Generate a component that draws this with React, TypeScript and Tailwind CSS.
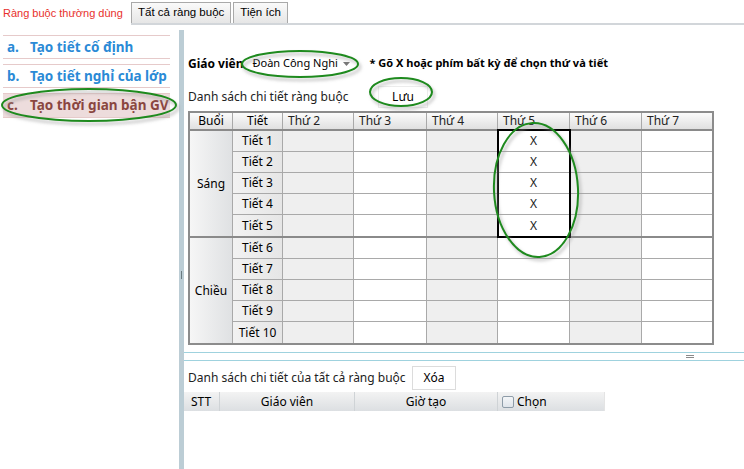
import React from "react";

const days = ["Thứ 2", "Thứ 3", "Thứ 4", "Thứ 5", "Thứ 6", "Thứ 7"];

function DayCells({ row, last }: { row: number; last: boolean }) {
  return (
    <>
      {days.map((d, i) => {
        const gray = i % 2 === 0;
        const x = i === 3 && row <= 5;
        return (
          <div
            key={d}
            className={`${gray ? "bg-[#efefef]" : "bg-white"} ${i < 5 ? "border-r border-r-[#a9a9a9]" : ""} ${
              last ? "" : "border-b border-b-[#a9a9a9]"
            } flex items-center justify-center text-[12px] text-[#222]`}
          >
            {x ? "X" : ""}
          </div>
        );
      })}
    </>
  );
}

function Ellipse({ cx, cy, rx, ry, rot = 0 }: { cx: number; cy: number; rx: number; ry: number; rot?: number }) {
  return (
    <g transform={`rotate(${rot} ${cx} ${cy})`}>
      <ellipse cx={cx + 2} cy={cy + 3} rx={rx} ry={ry} fill="none" stroke="#9a9a9a" strokeOpacity="0.45" strokeWidth="3" filter="url(#blur)" />
      <ellipse cx={cx} cy={cy} rx={rx} ry={ry} fill="none" stroke="#1e8a1e" strokeWidth="2" />
    </g>
  );
}

export default function App() {
  const grid = "grid grid-cols-[43px_50px_71px_73px_71px_72px_72px_70px]";
  const rowsSang = [1, 2, 3, 4, 5];
  const rowsChieu = [6, 7, 8, 9, 10];
  return (
    <div className="w-[744px] h-[469px] relative overflow-hidden bg-white text-black font-['Noto_Sans',sans-serif]">
      {/* top tabs */}
      <div className="flex h-[25px]">
        <div className="w-[131px] pl-[3px] pt-[6px] text-[11px] text-[#e8302c] leading-[15px] whitespace-nowrap font-['Liberation_Sans',sans-serif]">Ràng buộc thường dùng</div>
        <div className="flex-1 flex items-end border-b-2 border-[#d2d6da] font-['Liberation_Sans',sans-serif]">
          <div className="h-[21px] px-[6px] border border-b-0 border-[#a9a9a9] bg-gradient-to-b from-[#fafafa] to-[#e6e6e6] text-[11.5px] leading-[19px] whitespace-nowrap">Tất cả ràng buộc</div>
          <div className="h-[21px] ml-[2px] px-[6px] border border-b-0 border-[#a9a9a9] bg-gradient-to-b from-[#fafafa] to-[#e6e6e6] text-[11.5px] leading-[19px] whitespace-nowrap">Tiện ích</div>
        </div>
      </div>

      <div className="flex h-[444px]">
        {/* left panel */}
        <div className="w-[179px] pt-[10px] pl-[3px] flex flex-col gap-[5px]">
          <div className="w-[167px] h-[24px] border-y border-[#e6caca] flex items-center text-[13.5px] font-bold text-[#2a8ad6] whitespace-nowrap">
            <span className="w-[27px] pl-[4px]">a.</span>
            <span>Tạo tiết cố định</span>
          </div>
          <div className="w-[167px] h-[24px] border-y border-[#e6caca] flex items-center text-[13.5px] font-bold text-[#2a8ad6] whitespace-nowrap">
            <span className="w-[27px] pl-[4px]">b.</span>
            <span>Tạo tiết nghỉ của lớp</span>
          </div>
          <div className="w-[167px] h-[25px] border-y border-[#e6caca] bg-[#eddcdc] flex items-center text-[13.5px] font-bold text-[#8a4640] whitespace-nowrap">
            <span className="w-[27px] pl-[4px]">c.</span>
            <span>Tạo thời gian bận GV</span>
          </div>
        </div>

        {/* vertical splitter */}
        <div className="w-[5px] mt-[5px] bg-[#bccdd5] flex flex-col items-center justify-center">
          <div className="w-px h-[8px] bg-[#6a7a80] mt-[50px]" />
        </div>

        {/* right panel */}
        <div className="flex-1 flex flex-col">
          <div className="pl-[4px] pt-[29px] flex items-center h-[48px]">
            <span className="text-[12px] font-bold">Giáo viên</span>
            <div className="ml-[4px] w-[110px] h-[19px] flex items-center justify-between pl-[5px] pr-[8px] text-[11px] bg-white whitespace-nowrap">
              <span>Đoàn Công Nghi</span>
              <svg width="7" height="4" viewBox="0 0 7 4"><path d="M0 0h7L3.5 4z" fill="#777" /></svg>
            </div>
            <span className="ml-[12px] text-[11px] font-bold whitespace-nowrap">* Gõ X hoặc phím bất kỳ để chọn thứ và tiết</span>
          </div>

          <div className="pl-[4px] mt-[13px] flex items-center h-[22px]">
            <span className="w-[190px] text-[12px] text-[#222] whitespace-nowrap">Danh sách chi tiết ràng buộc</span>
            <div className="w-[50px] h-[22px] flex items-center justify-center text-[12px] border border-[#ececec] bg-white">Lưu</div>
          </div>

          {/* main table */}
          <div className="ml-[4px] mt-[3px] w-[526px] border-2 border-[#8c8c8c] text-[12px]">
            <div className={`${grid} h-[18px] border-b-2 border-b-[#8a8a8a]`}>
              <div className="border-r border-r-[#a9a9a9] bg-gradient-to-b from-[#fbfbfb] to-[#e0e0e0] flex items-center justify-center leading-none">Buổi</div>
              <div className="border-r border-r-[#a9a9a9] bg-gradient-to-b from-[#fbfbfb] to-[#e0e0e0] flex items-center justify-center leading-none">Tiết</div>
              {days.map((d, i) => (
                <div key={d} className={`${i < 5 ? "border-r border-r-[#a9a9a9]" : ""} bg-gradient-to-b from-[#fbfbfb] to-[#e0e0e0] flex items-center pl-[5px] leading-none text-[#222]`}>{d}</div>
              ))}
            </div>
            {[rowsSang, rowsChieu].map((rows, si) => (
              <div key={si} className={`${grid} grid-rows-[repeat(5,21px)] ${si === 0 ? "border-b-2 border-b-[#8a8a8a]" : ""}`}>
                <div className="row-span-5 border-r border-r-[#a9a9a9] bg-gradient-to-r from-[#f6f6f6] to-[#dfe1e3] flex items-center justify-center">
                  {si === 0 ? "Sáng" : "Chiều"}
                </div>
                {rows.map((r, ri) => (
                  <React.Fragment key={r}>
                    <div className={`border-r border-r-[#a9a9a9] ${ri < 4 ? "border-b border-b-[#a9a9a9]" : ""} bg-gradient-to-r from-[#f2f2f2] to-[#e6e6e6] flex items-center justify-center`}>
                      Tiết {r}
                    </div>
                    <DayCells row={r} last={ri === 4} />
                  </React.Fragment>
                ))}
              </div>
            ))}
          </div>

          {/* horizontal splitter */}
          <div className="mt-[7px] h-[9px] border-y border-[#9fd2de] bg-white flex items-center justify-end pr-[50px]">
            <div className="w-[8px] h-[3px] border-y border-[#8a8a8a]" />
          </div>

          <div className="pl-[4px] mt-[5px] flex items-center h-[24px]">
            <span className="w-[224px] text-[12px] text-[#222] whitespace-nowrap">Danh sách chi tiết của tất cả ràng buộc</span>
            <div className="w-[44px] h-[24px] flex items-center justify-center text-[12px] border border-[#dcdcdc] bg-white">Xóa</div>
          </div>

          <div className="mt-[2px] flex h-[19px] w-[421px] text-[12px] bg-gradient-to-b from-[#f3f3f3] to-[#dcdfe2]">
            <div className="w-[36px] border-r border-[#cfd3d6] pl-[7px] flex items-center">STT</div>
            <div className="w-[135px] border-r border-[#cfd3d6] flex items-center justify-center">Giáo viên</div>
            <div className="w-[143px] border-r border-[#cfd3d6] flex items-center justify-center">Giờ tạo</div>
            <div className="flex-1 flex items-center pl-[4px] gap-[3px] border-r border-[#e4e4e4]">
              <div className="w-[12px] h-[12px] rounded-[2px] border border-[#8e9ca8] bg-gradient-to-b from-[#f4f6f8] to-[#dfe4ea]" />
              <span>Chọn</span>
            </div>
          </div>
        </div>
      </div>

      {/* selection box */}
      <div className="absolute left-[497px] top-[129px] w-[74px] h-[109px] border-2 border-black pointer-events-none" />

      {/* annotation ellipses */}
      <svg className="absolute left-0 top-0 pointer-events-none" width="744" height="469">
        <defs>
          <filter id="blur" x="-20%" y="-20%" width="140%" height="140%">
            <feGaussianBlur stdDeviation="1.5" />
          </filter>
        </defs>
        <Ellipse cx={89} cy={105} rx={87} ry={16} />
        <Ellipse cx={300} cy={64} rx={58} ry={13} />
        <Ellipse cx={401} cy={92} rx={31} ry={14} />
        <Ellipse cx={536} cy={190} rx={42} ry={67} rot={-3} />
      </svg>
    </div>
  );
}
